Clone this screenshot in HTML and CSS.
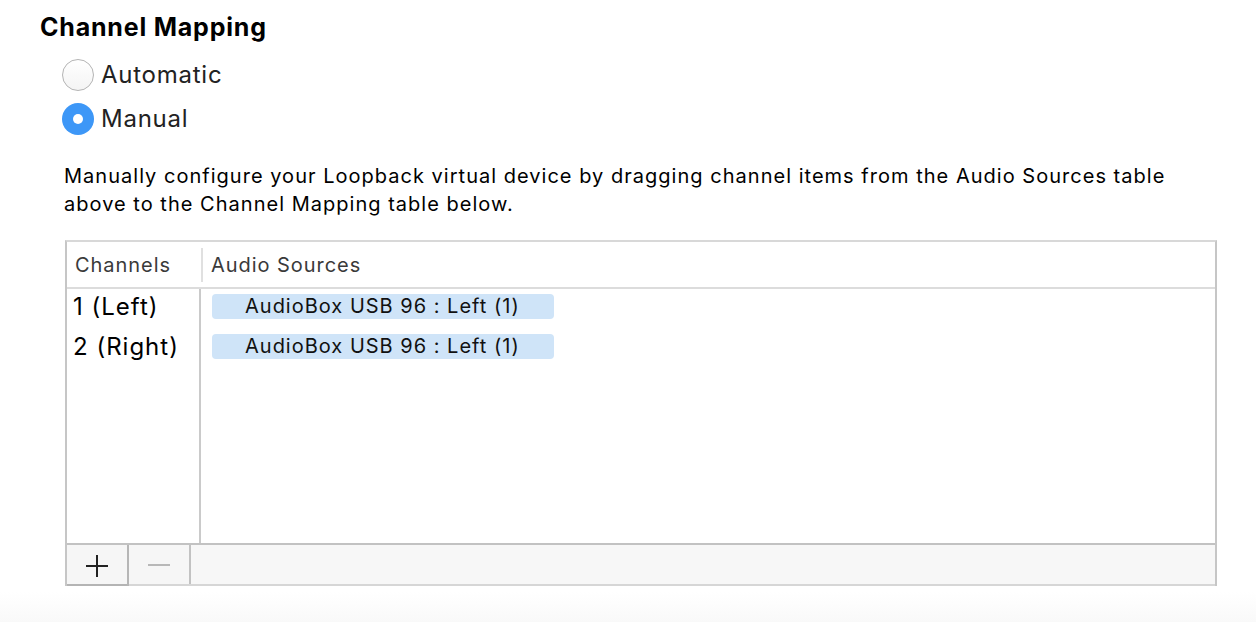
FILE: index.html
```html
<!DOCTYPE html>
<html>
<head>
<meta charset="utf-8">
<link rel="stylesheet" href="styles.css">
</head>
<body>
<div class="page">
  <h1 class="title">Channel Mapping</h1>
  <div class="radios">
    <label class="radio"><span class="dot"></span><span class="rlabel">Automatic</span></label>
    <label class="radio"><span class="dot on"></span><span class="rlabel">Manual</span></label>
  </div>
  <p class="desc">Manually configure your Loopback virtual device by dragging channel items from the Audio Sources table above to the Channel Mapping table below.</p>
  <div class="table">
    <div class="thead">
      <div class="th th-ch">Channels</div>
      <div class="th th-src">Audio Sources</div>
    </div>
    <div class="tbody">
      <div class="col-ch">
        <div class="ch">1 (Left)</div>
        <div class="ch">2 (Right)</div>
      </div>
      <div class="col-src">
        <div class="pill">AudioBox USB 96 : Left (1)</div>
        <div class="pill">AudioBox USB 96 : Left (1)</div>
      </div>
    </div>
    <div class="tfoot">
      <div class="btn plus"><svg width="24" height="24" viewBox="0 0 24 24"><path d="M12 1v22M1 12h22" stroke="#222" stroke-width="2"/></svg></div>
      <div class="btn minus"><svg width="24" height="24" viewBox="0 0 24 24"><path d="M1 12h22" stroke="#b8b8b8" stroke-width="2"/></svg></div>
      <div class="fill"></div>
    </div>
  </div>
</div>
</body>
</html>
```

FILE: styles.css
```css
html, body {
  margin: 0;
  padding: 0;
}
body {
  width: 1256px;
  height: 622px;
  overflow: hidden;
  background: linear-gradient(to bottom, #ffffff 0, #ffffff 592px, #f9f9f9 622px);
  font-family: Inter, "Open Sans", "Liberation Sans", sans-serif;
  color: #111;
}
.page {
  padding: 11px 0 0 40px;
}
.title {
  margin: 0;
  font-size: 25px;
  font-weight: 700;
  line-height: 32px;
  color: #000;
  letter-spacing: 0.8px;
}
.radios {
  display: flex;
  flex-direction: column;
  gap: 13px;
  margin: 16px 0 0 22px;
}
.radio {
  display: flex;
  align-items: center;
  gap: 7px;
  height: 31px;
}
.dot {
  box-sizing: border-box;
  width: 32px;
  height: 32px;
  border-radius: 50%;
  border: 1.5px solid #b4b4b4;
  background: linear-gradient(#ffffff, #f4f4f4);
  display: flex;
  align-items: center;
  justify-content: center;
}
.dot.on {
  border: none;
  background: #3d97f7;
}
.dot.on::after {
  content: "";
  width: 10px;
  height: 10px;
  border-radius: 50%;
  background: #fff;
}
.rlabel {
  font-size: 24px;
  letter-spacing: 0.75px;
  color: #222;
}
.desc {
  margin: 28px 0 0 24px;
  width: 1130px;
  font-size: 20px;
  line-height: 28px;
  letter-spacing: 1.02px;
  color: #000;
}
.table {
  margin: 22px 0 0 25px;
  width: 1152px;
  box-sizing: border-box;
  border-left: 2px solid #c6c6c6;
  border-right: 2px solid #c6c6c6;
  border-top: 2px solid #d8d8d8;
  display: flex;
  flex-direction: column;
}
.thead {
  display: flex;
  height: 45px;
  border-bottom: 2px solid #dcdcdc;
  align-items: center;
}
.th {
  font-size: 20px;
  letter-spacing: 0.95px;
  color: #3a3a3a;
}
.th-ch {
  width: 134px;
  padding-left: 8px;
  box-sizing: border-box;
}
.th-src {
  border-left: 2px solid #e0e0e0;
  padding-left: 8px;
  height: 34px;
  display: flex;
  align-items: center;
}
.tbody {
  display: flex;
  height: 254px;
}
.col-ch {
  width: 134px;
  box-sizing: border-box;
  border-right: 2px solid #cacaca;
  padding: 3px 0 0 6px;
  display: flex;
  flex-direction: column;
  gap: 10px;
}
.ch {
  font-size: 24px;
  line-height: 30px;
  letter-spacing: 1px;
  color: #000;
}
.col-src {
  padding: 5px 0 0 11px;
  display: flex;
  flex-direction: column;
  gap: 15px;
}
.pill {
  width: 342px;
  height: 25px;
  box-sizing: border-box;
  background: #cfe4f8;
  border-radius: 4px;
  padding-left: 33px;
  font-size: 20px;
  line-height: 25px;
  letter-spacing: 1px;
  color: #111;
}
.tfoot {
  display: flex;
  height: 43px;
  box-sizing: border-box;
  border-top: 2px solid #c2c2c2;
  border-bottom: 2px solid #d6d6d6;
  background: #f7f7f7;
}
.btn {
  width: 60px;
  display: flex;
  align-items: center;
  justify-content: center;
  border-right: 2px solid #c2c2c2;
  background: #f6f6f6;
}
.plus {
  border-right-color: #b6b6b6;
  box-shadow: inset 0 -2px 0 #b4b4b4;
  margin-bottom: -2px;
}
.fill {
  flex: 1;
}
```
